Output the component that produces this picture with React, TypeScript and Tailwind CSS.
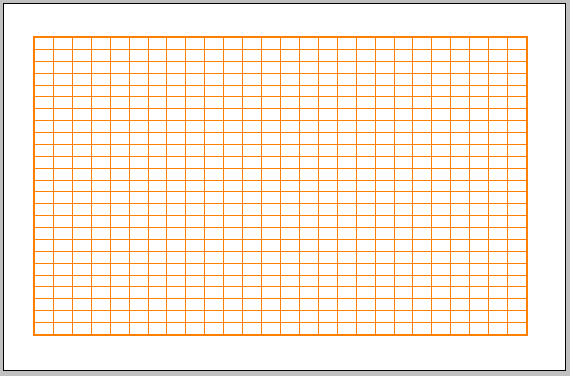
const COLS = 26
const ROWS = 25

export default function App() {
  const cells = Array.from({ length: COLS * ROWS })

  return (
    <div className="w-[570px] h-[376px] bg-[#c0c0c0] p-[3px]">
      <div className="w-[563px] h-[368px] border border-black bg-white pl-[29px] pt-[32px]">
        <div className="grid w-[495px] h-[300px] grid-cols-[repeat(26,minmax(0,1fr))] grid-rows-[repeat(25,minmax(0,1fr))] gap-px bg-[#ff8000] p-[2px]">
          {cells.map((_, i) => (
            <div key={i} className="bg-white" />
          ))}
        </div>
      </div>
    </div>
  )
}
